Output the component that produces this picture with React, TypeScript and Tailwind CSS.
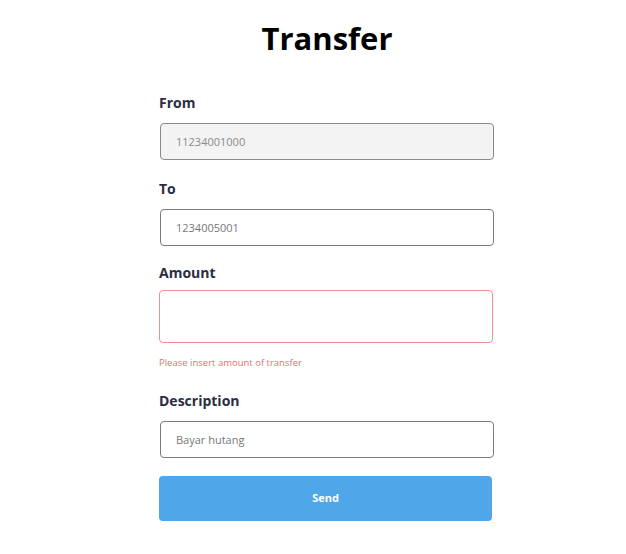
import React from "react";

const font = { fontFamily: '"Open Sans", "Noto Sans", sans-serif' };

const Label: React.FC<{ children: React.ReactNode; className?: string }> = ({ children, className }) => (
  <label className={`-ml-px block text-[14px] leading-[17px] font-bold text-[#2b2d42] ${className ?? ""}`}>{children}</label>
);

export default function App() {
  return (
    <div className="min-h-[554px] w-[626px] bg-white" style={font}>
      <div className="ml-[160px] w-[334px] pt-[20px]">
        <h1 className="text-center text-[31px] leading-[36px] font-bold text-black">Transfer</h1>

        <Label className="mt-[38px]">From</Label>
        <input
          disabled
          value="11234001000"
          readOnly
          className="mt-[12px] block h-[37px] w-full rounded-[4px] border border-[#8a8a8a] bg-[#f3f3f3] px-[15px] text-[11px] text-[#8a8a8a] outline-none"
        />

        <Label className="mt-[20px]">To</Label>
        <input
          value="1234005001"
          readOnly
          className="mt-[12px] block h-[37px] w-full rounded-[4px] border border-[#7a7a7a] bg-white px-[15px] text-[11px] text-[#777] outline-none"
        />

        <Label className="mt-[18px]">Amount</Label>
        <input
          readOnly
          className="mt-[9px] -ml-px block h-[53px] w-full rounded-[4px] border border-[#f0908c] bg-white px-[15px] text-[11px] outline-none"
        />
        <p className="mt-[14px] -ml-px text-[9.5px] leading-[12px] text-[#e8706b]">Please insert amount of transfer</p>

        <Label className="mt-[23px]">Description</Label>
        <input
          value="Bayar hutang"
          readOnly
          className="mt-[12px] block h-[37px] w-full rounded-[4px] border border-[#7a7a7a] bg-white px-[15px] text-[11px] text-[#777] outline-none"
        />

        <button className="mt-[18px] -ml-px block h-[45px] w-[333px] rounded-[4px] bg-[#4fa6e9] text-[11px] font-bold text-white">
          Send
        </button>
      </div>
    </div>
  );
}
